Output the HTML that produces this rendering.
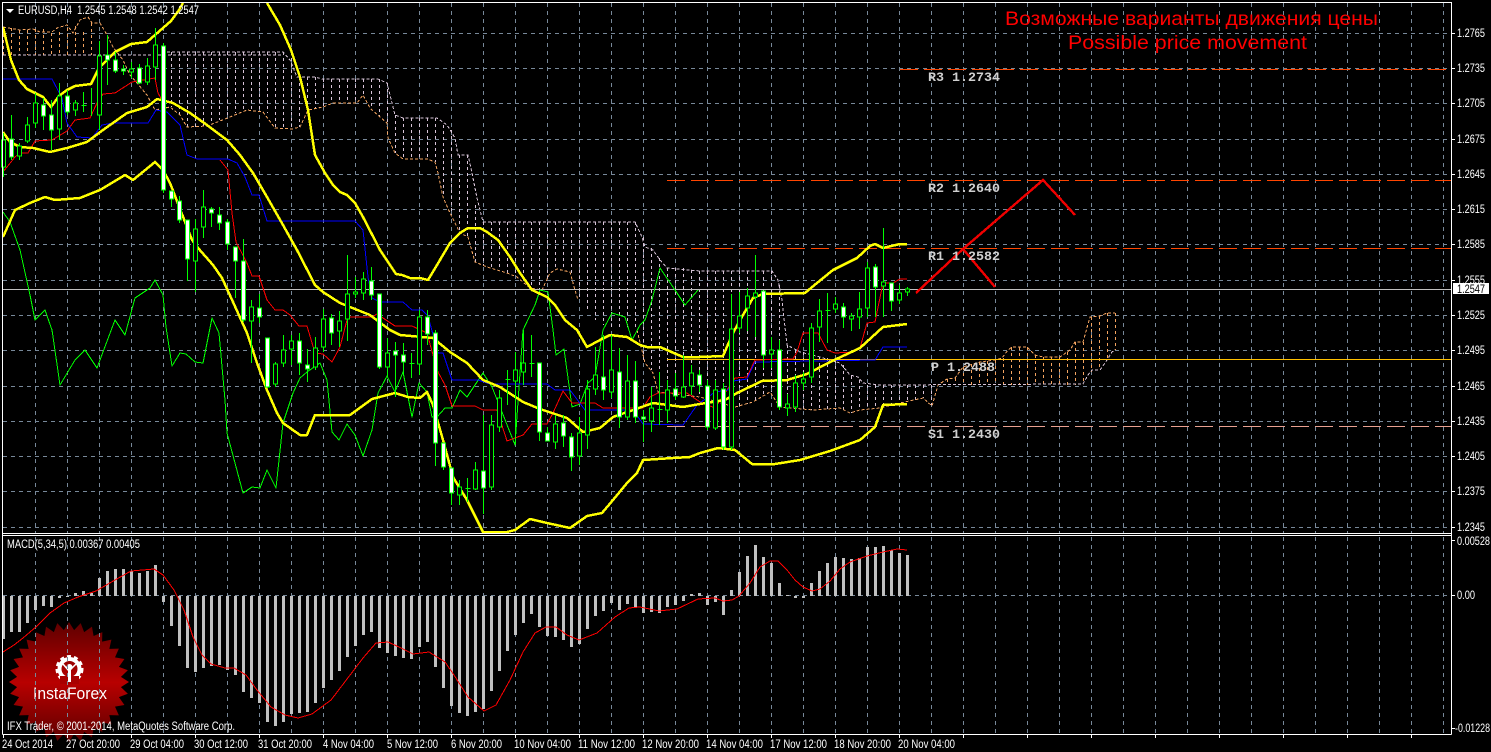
<!DOCTYPE html>
<html><head><meta charset="utf-8"><title>EURUSD,H4</title>
<style>html,body{margin:0;padding:0;background:#000;width:1491px;height:752px;overflow:hidden}svg{display:block}
text{font-family:"Liberation Sans",sans-serif;fill:#fff;font-size:11.5px}
.m{font-family:"Liberation Mono",monospace;font-weight:bold;font-size:13.3px;fill:#d0d0d0}
</style></head><body>
<svg width="1491" height="752" viewBox="0 0 1491 752" xmlns="http://www.w3.org/2000/svg">
<defs>
<linearGradient id="g" x1="0" y1="0" x2="0" y2="1"><stop offset="0" stop-color="#5e0000"/><stop offset=".5" stop-color="#b80000"/><stop offset="1" stop-color="#5a0000"/></linearGradient>
<clipPath id="st">
<polygon points="69,622 107,682 69,742 31,682" transform="rotate(0 69 682)"/>
<polygon points="69,622 107,682 69,742 31,682" transform="rotate(11.25 69 682)"/>
<polygon points="69,622 107,682 69,742 31,682" transform="rotate(22.5 69 682)"/>
<polygon points="69,622 107,682 69,742 31,682" transform="rotate(33.75 69 682)"/>
<polygon points="69,622 107,682 69,742 31,682" transform="rotate(45 69 682)"/>
<polygon points="69,622 107,682 69,742 31,682" transform="rotate(56.25 69 682)"/>
<polygon points="69,622 107,682 69,742 31,682" transform="rotate(67.5 69 682)"/>
<polygon points="69,622 107,682 69,742 31,682" transform="rotate(78.75 69 682)"/>
<polygon points="69,622 107,682 69,742 31,682" transform="rotate(90 69 682)"/>
<polygon points="69,622 107,682 69,742 31,682" transform="rotate(101.25 69 682)"/>
<polygon points="69,622 107,682 69,742 31,682" transform="rotate(112.5 69 682)"/>
<polygon points="69,622 107,682 69,742 31,682" transform="rotate(123.75 69 682)"/>
<polygon points="69,622 107,682 69,742 31,682" transform="rotate(135 69 682)"/>
<polygon points="69,622 107,682 69,742 31,682" transform="rotate(146.25 69 682)"/>
<polygon points="69,622 107,682 69,742 31,682" transform="rotate(157.5 69 682)"/>
<polygon points="69,622 107,682 69,742 31,682" transform="rotate(168.75 69 682)"/>
</clipPath>
</defs>
<rect width="1491" height="752" fill="#000"/>
<!-- logo -->
<rect x="9" y="622" width="121" height="121" fill="url(#g)" clip-path="url(#st)"/>
<circle cx="69.5" cy="669" r="10" fill="none" stroke="#fff" stroke-width="4"/>
<circle cx="69.5" cy="669" r="12.5" fill="none" stroke="#fff" stroke-width="3" stroke-dasharray="4 3"/>
<rect x="60" y="676" width="19" height="8" fill="#a80000"/>
<circle cx="69.5" cy="667" r="3" fill="#fff"/>
<path d="M69.5 668V682" stroke="#fff" stroke-width="3" fill="none"/>
<path d="M63 664L69 671L76 664" stroke="#fff" stroke-width="1.5" fill="none"/>
<text x="33" y="699" textLength="74" lengthAdjust="spacingAndGlyphs" style="font-size:17px">InstaForex</text>
<!-- grid -->
<g fill="none" stroke="#778899" stroke-width="1" stroke-dasharray="4 4" shape-rendering="crispEdges">
<path d="M3 33.5H1451M3 68.5H1451M3 103.5H1451M3 139.5H1451M3 174.5H1451M3 209.5H1451M3 244.5H1451M3 280.5H1451M3 315.5H1451M3 350.5H1451M3 386.5H1451M3 421.5H1451M3 456.5H1451M3 491.5H1451M3 527.5H1451M3 595.5H1451"/>
<path d="M35.5 3V533M67.5 3V533M99.5 3V533M131.5 3V533M163.5 3V533M195.5 3V533M227.5 3V533M259.5 3V533M291.5 3V533M323.5 3V533M355.5 3V533M387.5 3V533M419.5 3V533M451.5 3V533M483.5 3V533M515.5 3V533M547.5 3V533M579.5 3V533M611.5 3V533M643.5 3V533M675.5 3V533M707.5 3V533M739.5 3V533M771.5 3V533M803.5 3V533M835.5 3V533M867.5 3V533M899.5 3V533M931.5 3V533M963.5 3V533M995.5 3V533M1027.5 3V533M1059.5 3V533M1091.5 3V533M1123.5 3V533M1155.5 3V533M1187.5 3V533M1219.5 3V533M1251.5 3V533M1283.5 3V533M1315.5 3V533M1347.5 3V533M1379.5 3V533M1411.5 3V533M1443.5 3V533"/>
<path d="M35.5 537V734M67.5 537V734M99.5 537V734M131.5 537V734M163.5 537V734M195.5 537V734M227.5 537V734M259.5 537V734M291.5 537V734M323.5 537V734M355.5 537V734M387.5 537V734M419.5 537V734M451.5 537V734M483.5 537V734M515.5 537V734M547.5 537V734M579.5 537V734M611.5 537V734M643.5 537V734M675.5 537V734M707.5 537V734M739.5 537V734M771.5 537V734M803.5 537V734M835.5 537V734M867.5 537V734M899.5 537V734M931.5 537V734M963.5 537V734M995.5 537V734M1027.5 537V734M1059.5 537V734M1091.5 537V734M1123.5 537V734M1155.5 537V734M1187.5 537V734M1219.5 537V734M1251.5 537V734M1283.5 537V734M1315.5 537V734M1347.5 537V734M1379.5 537V734M1411.5 537V734M1443.5 537V734"/>
</g>
<!-- cloud hatch -->
<g fill="none" stroke-width="1" stroke-dasharray="3 3" shape-rendering="crispEdges">
<path stroke="#f4a460" d="M3.5 28V55M11.5 28V55M19.5 30V55M27.5 30V55M35.5 29V55M43.5 29V55M51.5 33V55M59.5 32V55M67.5 28V55M75.5 26V55M83.5 32V55M91.5 23V55
M947.5 379V385M955.5 378V385M963.5 367V385M971.5 364V385M979.5 362V385M987.5 361V385M995.5 360V385M1003.5 358V385M1011.5 347V385M1019.5 347V385M1027.5 347V385M1035.5 355V385M1043.5 357V385M1051.5 357V385M1059.5 357V385M1067.5 352V385M1075.5 342V385M1083.5 342V384M1091.5 317V372M1099.5 316V370M1107.5 313V360M1115.5 313V350"/>
<path stroke="#d8c4d8" d="M171.5 52V107M179.5 52V115M187.5 52V127M195.5 52V127M203.5 52V126M211.5 52V124M219.5 52V120M227.5 52V117M235.5 52V113M243.5 52V110M251.5 52V110M259.5 52V110M267.5 52V113M275.5 52V128M283.5 52V128M291.5 52V129M299.5 77V127M307.5 77V108M315.5 77V108M323.5 79V107M331.5 79V103M339.5 79V103M347.5 79V103M355.5 79V103M363.5 79V95M371.5 79V108M379.5 79V117M387.5 83V123M395.5 115V153M403.5 118V159M411.5 118V159M419.5 118V159M427.5 118V159M435.5 118V162M443.5 125V197M451.5 130V215M459.5 155V232M467.5 155V237M475.5 205V262M483.5 222V265M491.5 222V268M499.5 222V270M507.5 222V273M515.5 222V275M523.5 222V282M531.5 222V288M539.5 222V290M547.5 222V282M555.5 222V270M563.5 222V270M571.5 222V275M579.5 222V300M587.5 222V310M595.5 222V320M603.5 222V325M611.5 222V328M619.5 222V330M627.5 222V330M635.5 222V330M643.5 237V363M651.5 248V370M659.5 258V392M667.5 268V395M675.5 268V395M683.5 268V395M691.5 270V397M699.5 271V397M707.5 271V397M715.5 271V397M723.5 271V400M731.5 271V405M739.5 271V406M747.5 271V404M755.5 271V402M763.5 271V397M771.5 271V392M779.5 285V405M787.5 345V408M795.5 350V409M803.5 352V410M811.5 355V410M819.5 357V410M827.5 358V410M835.5 360V410M843.5 365V410M851.5 376V413M859.5 380V410M867.5 385V409M875.5 385V408M883.5 385V408M891.5 385V405M899.5 385V403M907.5 385V402M915.5 385V400M923.5 385V398M931.5 385V405"/>
</g>
<!-- cloud outlines -->
<g fill="none" stroke-width="1" stroke-dasharray="3 2" shape-rendering="crispEdges">
<polyline stroke="#f4a460" points="3,27 20,30 33,29 40,32 52,32 57,28 67,25 73,33 80,20 88,17 92,23 100,23 107,35 113,47 123,60 130,75 137,83 147,95 155,110 170,107 180,115 187,127 207,126 230,117 247,110 263,112 275,128 292,129 300,127 308,110 323,107 333,103 357,103 363,95 370,108 380,117 387,123 388,138 395,153 403,159 427,159 435,162 438,173 443,197 450,213 460,233 468,237 475,262 487,267 507,273 517,277 530,288 542,290 550,273 557,269 570,272 575,290 578,300"/>
<polyline stroke="#f4a460" points="637,330 645,363 653,373 658,392 700,397 735,407 753,402 770,392 780,407 813,410 840,408 850,413 860,410 880,408 900,403 923,398 932,406 938,385 947,379 955,378 963,367 980,362 995,360 1002,358 1008,350 1012,347 1027,347 1035,355 1043,357 1060,357 1070,350 1075,342 1083,342 1090,317 1100,316 1107,313 1115,313"/>
<polyline stroke="#d8c4d8" points="3,55 283,55"/>
<polyline stroke="#d8c4d8" points="167,52 283,52 290,60 297,77 315,77 322,79 378,79 387,83 392,103 395,115 403,118 437,118 447,125 455,138 458,155 468,155 472,173 477,198 483,222 635,222 642,237 645,247 653,250 660,260 667,268 700,271 772,271 778,280 782,300 787,345 800,352 820,357 840,363 850,375 858,377 863,383 880,385 1083,384 1088,375 1092,370 1100,370 1107,360 1112,352 1115,350"/>
</g>
<!-- level lines -->
<g fill="none" shape-rendering="crispEdges" stroke-width="1">
<path d="M3 289.5H1451" stroke="#c0c0c0"/>
<path d="M667 359.5H1451" stroke="#ffc000"/>
<path d="M667 248.5H1451M667 180.5H1451" stroke="#ff4500" stroke-dasharray="18 6"/>
<path d="M900 69.5H1451" stroke="#ff4500" stroke-dasharray="18 6"/>
<path d="M667 426.5H1451" stroke="#e8a090" stroke-dasharray="18 6"/>
</g>
<!-- indicator lines -->
<g fill="none" stroke-linejoin="round" shape-rendering="crispEdges">
<polyline stroke="#00ff00" stroke-width="1" points="3,212 10,222 20,250 30,295 35,320 45,310 52,330 60,385 75,360 85,350 97,368 115,320 125,335 135,298 150,288 155,280 163,295 166,327 172,366 180,353 186,354 195,362 203,363 212,318 219,333 225,400 227,433 243,493 252,487 260,488 267,470 276,488 283,423 293,393 300,378 307,372 320,363 327,380 332,432 339,440 347,424 355,435 363,456 372,430 378,393 387,376 395,392 403,372 412,417 419,383 427,392 432,417 437,417 445,408 452,408 460,390 467,397 483,373 492,387 498,402 515,445 523,330 535,305 540,290 548,292 553,330 556,355 564,349 572,407 580,404 588,383 595,377 603,330 612,313 625,317 632,340 640,325 645,320 652,300 660,268 675,290 685,305 698,290"/>
<polyline stroke="#ff0000" stroke-width="1" points="3,172 15,157 20,153 28,153 35,141 52,140 67,131 75,120 90,118 97,103 103,94 115,93 132,82 155,78 158,93 162,100"/>
<polyline stroke="#ff0000" stroke-width="1" points="220,160 228,170 232,213 236,242 247,263 252,276 259,276 267,300 275,310 283,310 290,315 299,326 307,326 315,353 323,354 332,362 340,347 347,320 350,317 372,317 377,314 395,326 412,326 427,333 433,355 438,372 445,385 452,406 475,406 483,410 497,410 507,441 523,435 532,424 547,424 553,413 563,391 572,403 595,403 603,408 643,408 650,397 658,393 687,393 700,402 715,408 735,378 747,377 755,360 793,359 797,352 803,333 818,333 827,350 835,353 853,352 860,348 867,323 875,322 883,283 893,283 900,279 907,279"/>
<polyline stroke="#0000ff" stroke-width="1" points="3,79 52,79 62,98 67,123 77,137 92,138 102,125 113,123 148,123 156,110 167,112 180,125 187,155 197,159 228,159 237,163 245,177 252,195 259,195 267,221 355,221 363,230 368,277 372,298 380,302 403,302 412,310 422,310 428,316 438,353 443,353 452,380 478,380 490,384 547,384 555,390 570,390 585,410 633,410 643,424 683,425 697,405 715,392 728,390 733,381 747,379 755,362 875,360 883,347 907,347"/>
<polyline stroke="#ffff00" stroke-width="2.5" points="3,27 11,60 19,80 27,89 35,93 43,97 51,107 59,96 67,90 75,86 91,84 99,68 107,60 115,52 123,48 131,44 147,42 163,28 171,21 179,10 183,3"/>
<polyline stroke="#ffff00" stroke-width="2.5" points="267,3 280,25 291,50 300,77 308,110 315,155 325,173 333,185 340,192 347,195 355,203 363,217 380,250 396,274 402,275 410,278 420,278 428,280 437,265 450,243 460,233 468,228 480,228 487,232 498,240 510,257 520,273 532,290 547,297 555,305 565,320 577,330 587,347 600,340 610,335 627,337 640,345 647,347 660,347 683,357 700,357 723,356 733,333 743,315 753,298 763,294 805,293 817,283 833,270 857,258 870,246 875,244 883,248 900,244 907,244"/>
<polyline stroke="#ffff00" stroke-width="2.5" points="3,132 10,142 20,147 33,148 50,152 67,148 87,142 103,130 127,113 147,107 157,99 173,103 190,113 207,125 227,140 240,155 253,173 267,197 283,225 297,250 315,285 323,292 340,303 350,307 370,315 390,330 400,335 433,338 450,352 467,363 483,380 500,387 523,402 540,409 567,418 583,432 600,428 613,417 633,410 653,403 683,407 700,404 725,400 737,393 762,381 787,380 807,374 830,362 860,348 883,327 907,324"/>
<polyline stroke="#ffff00" stroke-width="2.5" points="3,237 15,210 30,203 45,197 55,200 80,198 100,190 125,175 133,180 155,162 163,170 170,183 192,240 198,248 213,265 222,278 233,302 247,333 257,363 267,390 277,413 283,423 300,435 307,435 315,415 350,415 372,399 395,393 408,397 420,398 427,392 433,405 443,440 453,477 467,500 483,532 507,532 515,530 530,519 547,523 570,528 587,516 602,513 613,500 627,483 637,473 643,460 673,458 690,457 700,453 718,448 735,450 752,464 775,464 800,460 830,451 860,440 875,427 883,405 907,404"/>
</g>
<!-- candles -->
<g shape-rendering="crispEdges" fill="none" stroke="#00ff00" stroke-width="1">
<path d="M3.5 133V177M11.5 115V160M19.5 143V160M27.5 117V143M35.5 93V128M43.5 98V130M51.5 100V150M59.5 83V140M67.5 90V115M75.5 100V116M83.5 92V112M91.5 88V116M99.5 41V130M107.5 35V85M115.5 52V73M123.5 65V75M131.5 62V78M139.5 64V84M147.5 58V85M155.5 28V80M163.5 43V193M171.5 191V207M179.5 196V223M187.5 220V281M195.5 219V292M203.5 190V238M211.5 207V227M219.5 207V230M227.5 219V250M235.5 247V298M243.5 239V322M251.5 300V363M259.5 294V323M267.5 338V388M275.5 362V387M283.5 335V367M291.5 335V365M299.5 333V375M307.5 349V382M315.5 337V370M323.5 309V352M331.5 314V345M339.5 311V347M347.5 255V341M355.5 277V298M363.5 272V300M371.5 267V300M379.5 294V369M387.5 338V377M395.5 342V397M403.5 343V373M411.5 353V378M419.5 310V375M427.5 310V345M435.5 330V466M443.5 443V470M451.5 468V505M459.5 480V505M467.5 478V502M475.5 462V490M483.5 415V514M491.5 415V490M499.5 390V432M507.5 370V405M515.5 352V444M523.5 330V385M531.5 335V377M539.5 363V441M547.5 427V441M555.5 415V449M563.5 415V447M571.5 433V471M579.5 417V465M587.5 380V449M595.5 347V395M603.5 335V400M611.5 335V398M619.5 348V428M627.5 355V420M635.5 361V423M643.5 410V442M651.5 387V432M659.5 372V425M667.5 380V423M675.5 373V400M683.5 355V398M691.5 365V395M699.5 370V392M707.5 380V430M715.5 380V430M723.5 383V450M731.5 294V450M739.5 292V333M747.5 288V331M755.5 255V337M763.5 291V368M771.5 337V368M779.5 340V410M787.5 394V416M795.5 375V412M803.5 372V390M811.5 323V383M819.5 299V342M827.5 293V343M835.5 297V313M843.5 303V328M851.5 313V331M859.5 292V329M867.5 262V317M875.5 264V317M883.5 228V317M891.5 283V311M899.5 285V304M907.5 287V296
M81.5 105.5h5M409.5 363.5h5M465.5 488.5h5M505.5 379.5h5M529.5 363.5h5M657.5 409.5h5M825.5 310.5h5"/>
<path fill="#000" d="M1.5 140h4v27h-4zM17.5 146h4v10h-4zM25.5 125h4v16h-4zM33.5 103h4v20h-4zM57.5 96h4v33h-4zM73.5 103h4v7h-4zM97.5 56h4v59h-4zM129.5 69h4v3h-4zM145.5 66h4v16h-4zM153.5 45h4v22h-4zM193.5 229h4v32h-4zM201.5 207h4v20h-4zM249.5 307h4v14h-4zM273.5 364h4v20h-4zM281.5 350h4v13h-4zM289.5 341h4v8h-4zM313.5 348h4v19h-4zM321.5 319h4v28h-4zM337.5 321h4v10h-4zM345.5 294h4v25h-4zM353.5 292h4v2h-4zM361.5 279h4v14h-4zM385.5 353h4v14h-4zM417.5 317h4v47h-4zM457.5 487h4v8h-4zM473.5 470h4v19h-4zM489.5 425h4v62h-4zM497.5 398h4v29h-4zM513.5 370h4v11h-4zM521.5 363h4v9h-4zM553.5 424h4v18h-4zM577.5 433h4v23h-4zM585.5 389h4v46h-4zM593.5 375h4v14h-4zM609.5 370h4v22h-4zM625.5 381h4v36h-4zM649.5 408h4v13h-4zM665.5 390h4v20h-4zM681.5 387h4v10h-4zM689.5 373h4v13h-4zM713.5 390h4v38h-4zM729.5 329h4v118h-4zM737.5 316h4v12h-4zM745.5 296h4v12h-4zM753.5 293h4v4h-4zM769.5 350h4v4h-4zM785.5 404h4v4h-4zM793.5 383h4v24h-4zM801.5 379h4v4h-4zM809.5 328h4v49h-4zM817.5 311h4v16h-4zM833.5 304h4v5h-4zM849.5 316h4v3h-4zM857.5 309h4v8h-4zM865.5 268h4v40h-4zM881.5 282h4v4h-4zM897.5 293h4v7h-4zM905.5 289h4v3h-4z"/>
<path fill="#fff" d="M9.5 139h4v18h-4zM41.5 105h4v11h-4zM49.5 115h4v15h-4zM65.5 96h4v16h-4zM105.5 55h4v5h-4zM113.5 60h4v11h-4zM121.5 69h4v2h-4zM137.5 68h4v15h-4zM161.5 46h4v144h-4zM169.5 191h4v8h-4zM177.5 201h4v19h-4zM185.5 220h4v39h-4zM209.5 209h4v4h-4zM217.5 215h4v8h-4zM225.5 222h4v22h-4zM233.5 247h4v14h-4zM241.5 261h4v59h-4zM257.5 308h4v9h-4zM265.5 338h4v49h-4zM297.5 341h4v22h-4zM305.5 365h4v4h-4zM329.5 318h4v15h-4zM369.5 281h4v14h-4zM377.5 294h4v73h-4zM393.5 351h4v4h-4zM401.5 355h4v7h-4zM425.5 317h4v17h-4zM433.5 333h4v110h-4zM441.5 443h4v24h-4zM449.5 468h4v25h-4zM481.5 471h4v17h-4zM537.5 363h4v69h-4zM545.5 433h4v8h-4zM561.5 423h4v13h-4zM569.5 437h4v20h-4zM601.5 377h4v13h-4zM617.5 372h4v45h-4zM633.5 381h4v36h-4zM641.5 417h4v2h-4zM673.5 389h4v7h-4zM697.5 375h4v10h-4zM705.5 386h4v41h-4zM721.5 389h4v58h-4zM761.5 291h4v64h-4zM777.5 350h4v57h-4zM841.5 307h4v10h-4zM873.5 267h4v20h-4zM889.5 283h4v18h-4z"/>
</g>
<!-- red forecast -->
<g fill="none" stroke="#f00000" stroke-width="2.4" shape-rendering="crispEdges">
<polyline points="916,293 963,249 1043,180 1075,215"/>
<polyline points="963,249 995,287"/>
</g>
<!-- MACD histogram -->
<path shape-rendering="crispEdges" fill="none" stroke="#c0c0c0" stroke-width="3" d="M3.5 596V639M11.5 596V632M19.5 596V632M27.5 596V623M35.5 596V610M43.5 596V606M51.5 596V607M59.5 596V598M67.5 596V597M75.5 596V593M83.5 596V591M91.5 596V593M99.5 596V578M107.5 596V571M115.5 596V569M123.5 596V569M131.5 596V571M139.5 596V573M147.5 596V571M155.5 596V565M163.5 596V602M171.5 596V626M179.5 596V646M187.5 596V668M195.5 596V672M203.5 596V668M211.5 596V666M219.5 596V665M227.5 596V670M235.5 596V675M243.5 596V692M251.5 596V698M259.5 596V703M267.5 596V722M275.5 596V726M283.5 596V722M291.5 596V714M299.5 596V713M307.5 596V712M315.5 596V703M323.5 596V688M331.5 596V680M339.5 596V671M347.5 596V657M355.5 596V646M363.5 596V635M371.5 596V632M379.5 596V648M387.5 596V653M395.5 596V656M403.5 596V658M411.5 596V659M419.5 596V647M427.5 596V642M435.5 596V667M443.5 596V688M451.5 596V706M459.5 596V713M467.5 596V716M475.5 596V712M483.5 596V709M491.5 596V691M499.5 596V671M507.5 596V651M515.5 596V635M523.5 596V623M531.5 596V614M539.5 596V627M547.5 596V636M555.5 596V637M563.5 596V640M571.5 596V647M579.5 596V644M587.5 596V629M595.5 596V616M603.5 596V611M611.5 596V603M619.5 596V610M627.5 596V604M635.5 596V607M643.5 596V613M651.5 596V612M659.5 596V613M667.5 596V607M675.5 596V605M683.5 596V601M691.5 596V594M699.5 596V593M707.5 596V605M715.5 596V602M723.5 596V615M731.5 596V590M739.5 596V572M747.5 596V556M755.5 596V545M763.5 596V557M771.5 596V563M779.5 596V583M787.5 596V595M795.5 596V598M803.5 596V598M811.5 596V583M819.5 596V571M827.5 596V563M835.5 596V557M843.5 596V558M851.5 596V559M859.5 596V558M867.5 596V547M875.5 596V547M883.5 596V546M891.5 596V550M899.5 596V553M907.5 596V555"/>
<polyline fill="none" stroke="#ff0000" stroke-width="1" shape-rendering="crispEdges" points="3,652 14,645 23,638 37,626 50,613 64,603 78,597 96,591 115,580 131,571 154,569 163,575 174,590 184,610 193,637 202,655 211,664 225,668 234,668 246,675 257,690 271,707 285,715 298,718 312,714 331,700 344,683 363,658 376,643 388,642 399,647 413,654 429,652 445,662 454,675 468,697 484,711 496,705 510,680 523,652 535,633 546,627 556,627 567,635 579,640 597,633 615,617 629,608 640,607 659,611 677,609 698,599 715,598 723,601 732,600 739,596 750,583 760,567 770,561 778,561 787,570 795,580 803,587 812,591 820,589 830,581 840,569 850,562 867,556 883,552 897,549 907,550"/>
<!-- frames -->
<g shape-rendering="crispEdges" fill="none" stroke="#fff" stroke-width="1">
<path d="M2.5 734.5V2.5H1451.5V734.5M2.5 533.5H1451.5M2.5 535.5H1451.5M2.5 734.5H1451.5"/>
<path d="M1452 33.5h3M1452 68.5h3M1452 103.5h3M1452 139.5h3M1452 174.5h3M1452 209.5h3M1452 244.5h3M1452 280.5h3M1452 315.5h3M1452 350.5h3M1452 386.5h3M1452 421.5h3M1452 456.5h3M1452 491.5h3M1452 527.5h3M1452 595.5h3M1452 540.5h3M1452 728.5h3"/>
<path d="M3.5 735v3M67.5 735v3M131.5 735v3M195.5 735v3M259.5 735v3M323.5 735v3M387.5 735v3M451.5 735v3M515.5 735v3M579.5 735v3M643.5 735v3M707.5 735v3M771.5 735v3M835.5 735v3M899.5 735v3M963.5 735v3M1027.5 735v3M1091.5 735v3M1155.5 735v3M1219.5 735v3M1283.5 735v3M1347.5 735v3M1411.5 735v3"/>
</g>
<!-- header -->
<path d="M6 9h8l-4 4z" fill="#fff"/>
<text x="18" y="14" textLength="181" lengthAdjust="spacingAndGlyphs" xml:space="preserve">EURUSD,H4  1.2545 1.2548 1.2542 1.2547</text>
<text x="7" y="548" textLength="133" lengthAdjust="spacingAndGlyphs">MACD(5,34,5) 0.00367 0.00405</text>
<text x="7" y="730" textLength="228" lengthAdjust="spacingAndGlyphs">IFX Trader, © 2001-2014, MetaQuotes Software Corp.</text>
<!-- forecast labels -->
<text x="1005" y="25" textLength="373" lengthAdjust="spacingAndGlyphs" style="font-size:19.5px;fill:#f00">Возможные варианты движения цены</text>
<text x="1068" y="49" textLength="239" lengthAdjust="spacingAndGlyphs" style="font-size:19.5px;fill:#f00">Possible price movement</text>
<text class="m" x="928" y="81" textLength="72" lengthAdjust="spacingAndGlyphs">R3 1.2734</text>
<text class="m" x="928" y="192" textLength="72" lengthAdjust="spacingAndGlyphs">R2 1.2640</text>
<text class="m" x="928" y="260" textLength="72" lengthAdjust="spacingAndGlyphs">R1 1.2582</text>
<text class="m" x="931" y="371" textLength="64" lengthAdjust="spacingAndGlyphs">P 1.2488</text>
<text class="m" x="928" y="438" textLength="72" lengthAdjust="spacingAndGlyphs">S1 1.2430</text>
<!-- right axis -->
<g>
<text x="1457" y="37" textLength="28" lengthAdjust="spacingAndGlyphs">1.2765</text>
<text x="1457" y="72" textLength="28" lengthAdjust="spacingAndGlyphs">1.2735</text>
<text x="1457" y="107" textLength="28" lengthAdjust="spacingAndGlyphs">1.2705</text>
<text x="1457" y="143" textLength="28" lengthAdjust="spacingAndGlyphs">1.2675</text>
<text x="1457" y="178" textLength="28" lengthAdjust="spacingAndGlyphs">1.2645</text>
<text x="1457" y="213" textLength="28" lengthAdjust="spacingAndGlyphs">1.2615</text>
<text x="1457" y="248" textLength="28" lengthAdjust="spacingAndGlyphs">1.2585</text>
<text x="1457" y="284" textLength="28" lengthAdjust="spacingAndGlyphs">1.2555</text>
<text x="1457" y="319" textLength="28" lengthAdjust="spacingAndGlyphs">1.2525</text>
<text x="1457" y="354" textLength="28" lengthAdjust="spacingAndGlyphs">1.2495</text>
<text x="1457" y="390" textLength="28" lengthAdjust="spacingAndGlyphs">1.2465</text>
<text x="1457" y="425" textLength="28" lengthAdjust="spacingAndGlyphs">1.2435</text>
<text x="1457" y="460" textLength="28" lengthAdjust="spacingAndGlyphs">1.2405</text>
<text x="1457" y="495" textLength="28" lengthAdjust="spacingAndGlyphs">1.2375</text>
<text x="1457" y="531" textLength="28" lengthAdjust="spacingAndGlyphs">1.2345</text>
<rect x="1453" y="283" width="36" height="11" fill="#fff"/>
<text x="1457" y="293" textLength="28" lengthAdjust="spacingAndGlyphs" style="fill:#000">1.2547</text>
<text x="1457" y="545" textLength="33" lengthAdjust="spacingAndGlyphs">0.00528</text>
<text x="1457" y="599" textLength="18" lengthAdjust="spacingAndGlyphs">0.00</text>
<text x="1455" y="732" textLength="35" lengthAdjust="spacingAndGlyphs">-0.01228</text>
</g>
<!-- time axis -->
<g>
<text x="2" y="748" textLength="51" lengthAdjust="spacingAndGlyphs">24 Oct 2014</text>
<text x="66" y="748" textLength="54" lengthAdjust="spacingAndGlyphs">27 Oct 20:00</text>
<text x="130" y="748" textLength="54" lengthAdjust="spacingAndGlyphs">29 Oct 04:00</text>
<text x="194" y="748" textLength="54" lengthAdjust="spacingAndGlyphs">30 Oct 12:00</text>
<text x="258" y="748" textLength="54" lengthAdjust="spacingAndGlyphs">31 Oct 20:00</text>
<text x="323" y="748" textLength="51" lengthAdjust="spacingAndGlyphs">4 Nov 04:00</text>
<text x="387" y="748" textLength="51" lengthAdjust="spacingAndGlyphs">5 Nov 12:00</text>
<text x="451" y="748" textLength="51" lengthAdjust="spacingAndGlyphs">6 Nov 20:00</text>
<text x="514" y="748" textLength="57" lengthAdjust="spacingAndGlyphs">10 Nov 04:00</text>
<text x="578" y="748" textLength="57" lengthAdjust="spacingAndGlyphs">11 Nov 12:00</text>
<text x="642" y="748" textLength="57" lengthAdjust="spacingAndGlyphs">12 Nov 20:00</text>
<text x="706" y="748" textLength="57" lengthAdjust="spacingAndGlyphs">14 Nov 04:00</text>
<text x="770" y="748" textLength="57" lengthAdjust="spacingAndGlyphs">17 Nov 12:00</text>
<text x="834" y="748" textLength="57" lengthAdjust="spacingAndGlyphs">18 Nov 20:00</text>
<text x="898" y="748" textLength="57" lengthAdjust="spacingAndGlyphs">20 Nov 04:00</text>
</g>
</svg>
</body></html>
